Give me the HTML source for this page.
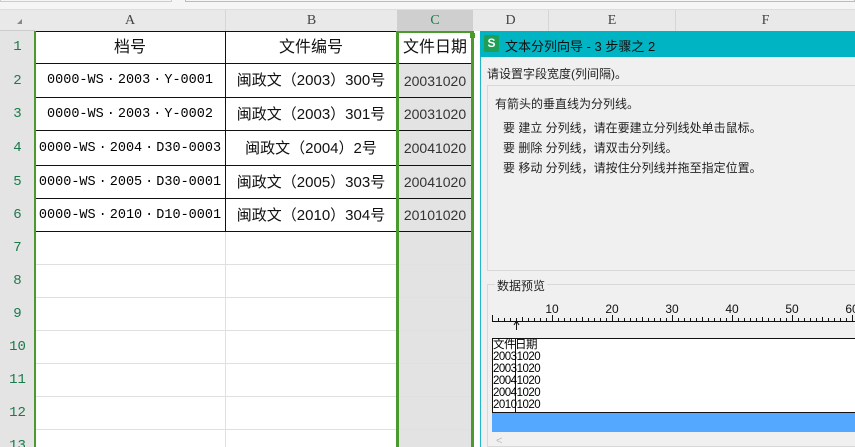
<!DOCTYPE html>
<html style="overflow:hidden;width:855px;height:447px"><head><meta charset="utf-8"><style>
*{margin:0;padding:0;box-sizing:border-box}
body{width:855px;height:447px;overflow:hidden;background:#fff;position:relative;font-family:"Liberation Sans","Noto Sans CJK SC",sans-serif}
.a{position:absolute}
.hdr{background:#e9e9e9;color:#444;font-family:"Liberation Serif","Noto Sans CJK SC",serif;font-size:14px;text-align:center;line-height:21px}
.rh{background:#e4e4e4;color:#1a7a4a;font-family:"Liberation Mono",monospace;font-size:14px;text-align:center;width:35px;left:0}
.cell{font-family:"Liberation Sans","Noto Sans CJK SC",sans-serif;font-size:14px;color:#111;text-align:center;white-space:nowrap}
.dt{font-size:12px;color:#222;white-space:nowrap;font-family:"Liberation Sans","Noto Sans CJK SC",sans-serif}
.d{padding:0 3px}
</style></head><body>
<div class="a" style="left:0;top:0;width:855px;height:10px;background:#f5f5f5;border-bottom:1px solid #ddd"></div>
<div class="a" style="left:0;top:0;width:172px;height:2px;border:1px solid #ccc;border-top:none"></div>
<div class="a" style="left:185px;top:0;width:670px;height:2px;border:1px solid #bbb;border-top:none"></div>
<div class="a hdr" style="left:0;top:10px;width:855px;height:21px;border-bottom:1px solid #ccc"></div>
<div class="a" style="left:17px;top:19px;width:0;height:0;border-left:5px solid transparent;border-bottom:5px solid #888"></div>
<div class="a hdr" style="left:35px;top:10px;width:190px;height:21px">A</div>
<div class="a hdr" style="left:225px;top:10px;width:172px;height:21px;border-left:1px solid #d6d6d6">B</div>
<div class="a hdr" style="left:397px;top:10px;width:76px;height:21px;background:#cfcfcf;color:#1a7a4a">C</div>
<div class="a hdr" style="left:473px;top:10px;width:75px;height:21px">D</div>
<div class="a hdr" style="left:548px;top:10px;width:127px;height:21px;border-left:1px solid #d6d6d6">E</div>
<div class="a hdr" style="left:675px;top:10px;width:180px;height:21px;border-left:1px solid #d6d6d6">F</div>
<div class="a" style="left:0;top:31px;width:35px;height:416px;background:#e4e4e4"></div>
<div class="a" style="left:225px;top:232px;width:1px;height:215px;background:#e0e0e0"></div>
<div class="a" style="left:397px;top:64px;width:76px;height:383px;background:#e3e3e3"></div>
<div class="a" style="left:397px;top:31px;width:76px;height:33px;background:#fff"></div>
<script>
var tops=[31,64,98,131,166,199,232,265,298,331,364,397,430,447];
var h='';
for(var i=0;i<13;i++){var t=tops[i],hh=tops[i+1]-t;
h+='<div class="a rh" style="top:'+t+'px;height:'+hh+'px;line-height:'+(i==12?33:hh)+'px;overflow:hidden">'+(i+1)+'</div>';
if(i<12)h+='<div class="a" style="left:35px;top:'+(tops[i+1]-1)+'px;width:438px;height:1px;background:'+(i<6?'#111':'#e0e0e0')+'"></div>';
}
document.write(h);
</script>
<div class="a" style="left:35px;top:31px;width:438px;height:1px;background:#111"></div>
<div class="a" style="left:225px;top:31px;width:1px;height:201px;background:#111"></div>
<div class="a cell" style="left:35px;top:31px;width:190px;line-height:33px;font-size:16px">档号</div>
<div class="a cell" style="left:225px;top:31px;width:172px;line-height:33px;font-size:16px">文件编号</div>
<div class="a cell" style="left:397px;top:31px;width:76px;line-height:33px;font-size:16px">文件日期</div>
<script>
var A=[["2003","Y-0001"],["2003","Y-0002"],["2004","D30-0003"],["2005","D30-0001"],["2010","D10-0001"]];
var B=["闽政文（2003）300号","闽政文（2003）301号","闽政文（2004）2号","闽政文（2005）303号","闽政文（2010）304号"];
var C=["20031020","20031020","20041020","20041020","20101020"];
var s='';
for(var i=0;i<5;i++){var t=tops[i+1],hh=tops[i+2]-t;
s+='<div class="a cell" style="left:35px;top:'+t+'px;width:190px;line-height:'+hh+'px;font-family:\'Liberation Mono\',monospace;font-size:13.5px;color:#000">0000-WS<span class="d">·</span>'+A[i][0]+'<span class="d">·</span>'+A[i][1]+'</div>';
s+='<div class="a cell" style="left:225px;top:'+t+'px;width:172px;line-height:'+hh+'px;font-size:15px">'+B[i]+'</div>';
s+='<div class="a cell" style="left:397px;top:'+t+'px;width:76px;line-height:'+hh+'px;color:#333">'+C[i]+'</div>';}
document.write(s);
</script>
<div class="a" style="left:34px;top:31px;width:2px;height:416px;background:#4a9a2e"></div>
<div class="a" style="left:396px;top:31px;width:3px;height:416px;background:#4a9a2e"></div>
<div class="a" style="left:471px;top:31px;width:3px;height:416px;background:#4a9a2e"></div>
<div class="a" style="left:396px;top:31px;width:78px;height:2px;background:#4a9a2e"></div>
<div class="a" style="left:470px;top:33px;width:5px;height:5px;background:#4a9a2e"></div>
<div class="a" style="left:480px;top:31px;width:375px;height:416px;background:#f0f0f0;border-left:1px solid #20b8c8"></div>
<div class="a" style="left:480px;top:31px;width:375px;height:26px;background:#00b4c4"></div>
<div class="a" style="left:484px;top:35px;width:15px;height:17px;background:#1f9e58;border-radius:2px;color:#fff;font-weight:bold;font-size:12px;text-align:center;line-height:17px">S</div>
<div class="a dt" style="left:505px;top:36px;font-size:13px;color:#111">文本分列向导 - 3 步骤之 2</div>
<div class="a dt" style="left:487px;top:65px">请设置字段宽度(列间隔)。</div>
<div class="a" style="left:487px;top:85px;width:368px;height:186px;border:1px solid #d8d8d8;border-right:none"></div>
<div class="a dt" style="left:495px;top:95px">有箭头的垂直线为分列线。</div>
<div class="a dt" style="left:503px;top:119px">要 建立 分列线，请在要建立分列线处单击鼠标。</div>
<div class="a dt" style="left:503px;top:139px">要 删除 分列线，请双击分列线。</div>
<div class="a dt" style="left:503px;top:159px">要 移动 分列线，请按住分列线并拖至指定位置。</div>
<div class="a" style="left:487px;top:284px;width:368px;height:163px;border:1px solid #d8d8d8;border-right:none"></div>
<div class="a dt" style="left:495px;top:277px;background:#f0f0f0;padding:0 2px">数据预览</div>
<svg class="a" style="left:490px;top:300px" width="365" height="30">
<g font-family="Liberation Sans" font-size="12" fill="#111" text-anchor="middle">
<text x="62" y="13">10</text><text x="122" y="13">20</text><text x="182" y="13">30</text><text x="242" y="13">40</text><text x="302" y="13">50</text><text x="362" y="13">60</text></g>
<line x1="2" y1="21.5" x2="365" y2="21.5" stroke="#111"/>
<path id="t" stroke="#111" fill="none" d=""/>
<line x1="26.5" y1="21" x2="26.5" y2="30" stroke="#111"/>
<path d="M24 25 L26.5 21 L29 25" stroke="#111" fill="none"/>
</svg>
<script>
var d='';for(var k=0;k<=60;k++){var x=2+k*6+.5;var l=k%10==0?6:(k%5==0?4:3);d+='M'+x+' '+(21-l)+'V21';}
document.getElementById('t').setAttribute('d',d);
</script>
<div class="a" style="left:492px;top:338px;width:363px;height:75px;background:#fff;border:1px solid #111;border-right:none"></div>
<div class="a" style="left:515px;top:338px;width:1px;height:74px;background:#111"></div>
<div class="a" style="left:493px;top:339px;font-family:'Liberation Sans','Noto Sans CJK SC',sans-serif;font-size:11.5px;line-height:12px;color:#000;letter-spacing:-.5px">文件日期<br>20031020<br>20031020<br>20041020<br>20041020<br>20101020</div>
<div class="a" style="left:492px;top:412px;width:363px;height:20px;background:#55a8ff;border-top:1px solid #111"></div>
<div class="a dt" style="left:496px;top:435px;color:#bbb;font-size:11px">&lt;</div>
</body></html>
